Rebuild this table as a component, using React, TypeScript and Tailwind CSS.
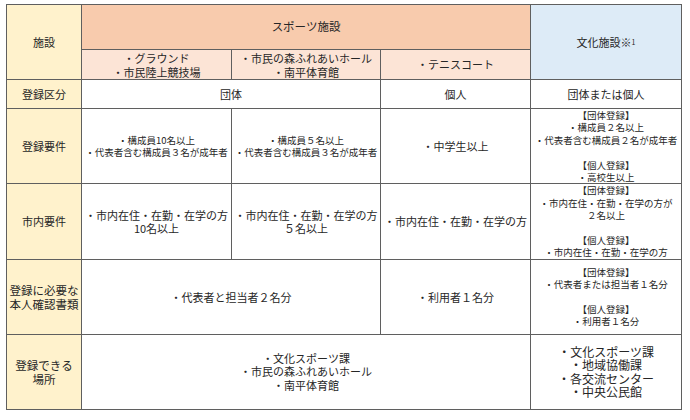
import React from "react";

const B = "border border-[#5f5f5f]";
const base = `${B} text-center align-middle p-0 whitespace-nowrap`;

function Lines({ lines, cls }: { lines: string[]; cls: string }) {
  return (
    <div className={cls}>
      {lines.map((l, i) => (
        <div key={i}>{l === "" ? "\u00a0" : l}</div>
      ))}
    </div>
  );
}

export default function App() {
  const small = "text-[9.5px] leading-[12.4px]";
  const mid = "text-[11px] leading-[13px]";
  return (
    <div
      className="w-[690px] h-[420px] bg-white pl-[6px] pt-[4px] text-[#262626]"
      style={{ fontFamily: '"Noto Sans CJK JP", "Noto Sans", sans-serif' }}
    >
      <table className="border-collapse table-fixed w-[675px]">
        <colgroup>
          <col className="w-[75px]" />
          <col className="w-[150px]" />
          <col className="w-[149px]" />
          <col className="w-[150px]" />
          <col className="w-[151px]" />
        </colgroup>
        <tbody>
          <tr className="h-[45px]">
            <td rowSpan={2} className={`${base} bg-[#fff2cc] text-[11px]`}>
              施設
            </td>
            <td colSpan={3} className={`${base} bg-[#f8cbad] text-[11.5px]`}>
              スポーツ施設
            </td>
            <td rowSpan={2} className={`${base} bg-[#ddebf7] text-[11px]`}>
              文化施設※<sup className="text-[7px] relative -top-[2px]">1</sup>
            </td>
          </tr>
          <tr className="h-[30px]">
            <td className={`${base} bg-[#fce4d6]`}>
              <Lines lines={["・グラウンド", "・市民陸上競技場"]} cls="text-[11px] leading-[14px]" />
            </td>
            <td className={`${base} bg-[#fce4d6]`}>
              <Lines lines={["・市民の森ふれあいホール", "・南平体育館"]} cls="text-[11px] leading-[14px]" />
            </td>
            <td className={`${base} bg-[#fce4d6] text-[11px]`}>・テニスコート</td>
          </tr>
          <tr className="h-[29px]">
            <td className={`${base} bg-[#fff2cc] text-[11px]`}>登録区分</td>
            <td colSpan={2} className={`${base} text-[11px]`}>団体</td>
            <td className={`${base} text-[11px]`}>個人</td>
            <td className={`${base} text-[11px]`}>団体または個人</td>
          </tr>
          <tr className="h-[75px]">
            <td className={`${base} bg-[#fff2cc] text-[11px]`}>登録要件</td>
            <td className={base}>
              <Lines lines={["・構成員10名以上", "・代表者含む構成員３名が成年者"]} cls={small} />
            </td>
            <td className={base}>
              <Lines lines={["・構成員５名以上", "・代表者含む構成員３名が成年者"]} cls={small} />
            </td>
            <td className={`${base} text-[11px]`}>・中学生以上</td>
            <td className={base}>
              <Lines
                lines={["【団体登録】", "・構成員２名以上", "・代表者含む構成員２名が成年者", "", "【個人登録】", "・高校生以上"]}
                cls={small}
              />
            </td>
          </tr>
          <tr className="h-[75px]">
            <td className={`${base} bg-[#fff2cc] text-[11px]`}>市内要件</td>
            <td className={base}>
              <Lines lines={["・市内在住・在勤・在学の方", "10名以上"]} cls={mid} />
            </td>
            <td className={base}>
              <Lines lines={["・市内在住・在勤・在学の方", "５名以上"]} cls={mid} />
            </td>
            <td className={`${base} text-[11px]`}>・市内在住・在勤・在学の方</td>
            <td className={base}>
              <Lines
                lines={["【団体登録】", "・市内在住・在勤・在学の方が", "２名以上", "", "【個人登録】", "・市内在住・在勤・在学の方"]}
                cls={small}
              />
            </td>
          </tr>
          <tr className="h-[75px]">
            <td className={`${base} bg-[#fff2cc]`}>
              <Lines lines={["登録に必要な", "本人確認書類"]} cls="text-[11.5px] leading-[14px]" />
            </td>
            <td colSpan={2} className={`${base} text-[11px]`}>・代表者と担当者２名分</td>
            <td className={`${base} text-[11px]`}>・利用者１名分</td>
            <td className={base}>
              <Lines
                lines={["【団体登録】", "・代表者または担当者１名分", "", "【個人登録】", "・利用者１名分"]}
                cls={small}
              />
            </td>
          </tr>
          <tr className="h-[75px]">
            <td className={`${base} bg-[#fff2cc]`}>
              <Lines lines={["登録できる", "場所"]} cls="text-[11.5px] leading-[14px]" />
            </td>
            <td colSpan={3} className={base}>
              <Lines lines={["・文化スポーツ課", "・市民の森ふれあいホール", "・南平体育館"]} cls="text-[11px] leading-[13.5px]" />
            </td>
            <td className={base}>
              <Lines
                lines={["・文化スポーツ課", "・地域協働課", "・各交流センター", "・中央公民館"]}
                cls="text-[12px] leading-[13.4px]"
              />
            </td>
          </tr>
        </tbody>
      </table>
    </div>
  );
}
